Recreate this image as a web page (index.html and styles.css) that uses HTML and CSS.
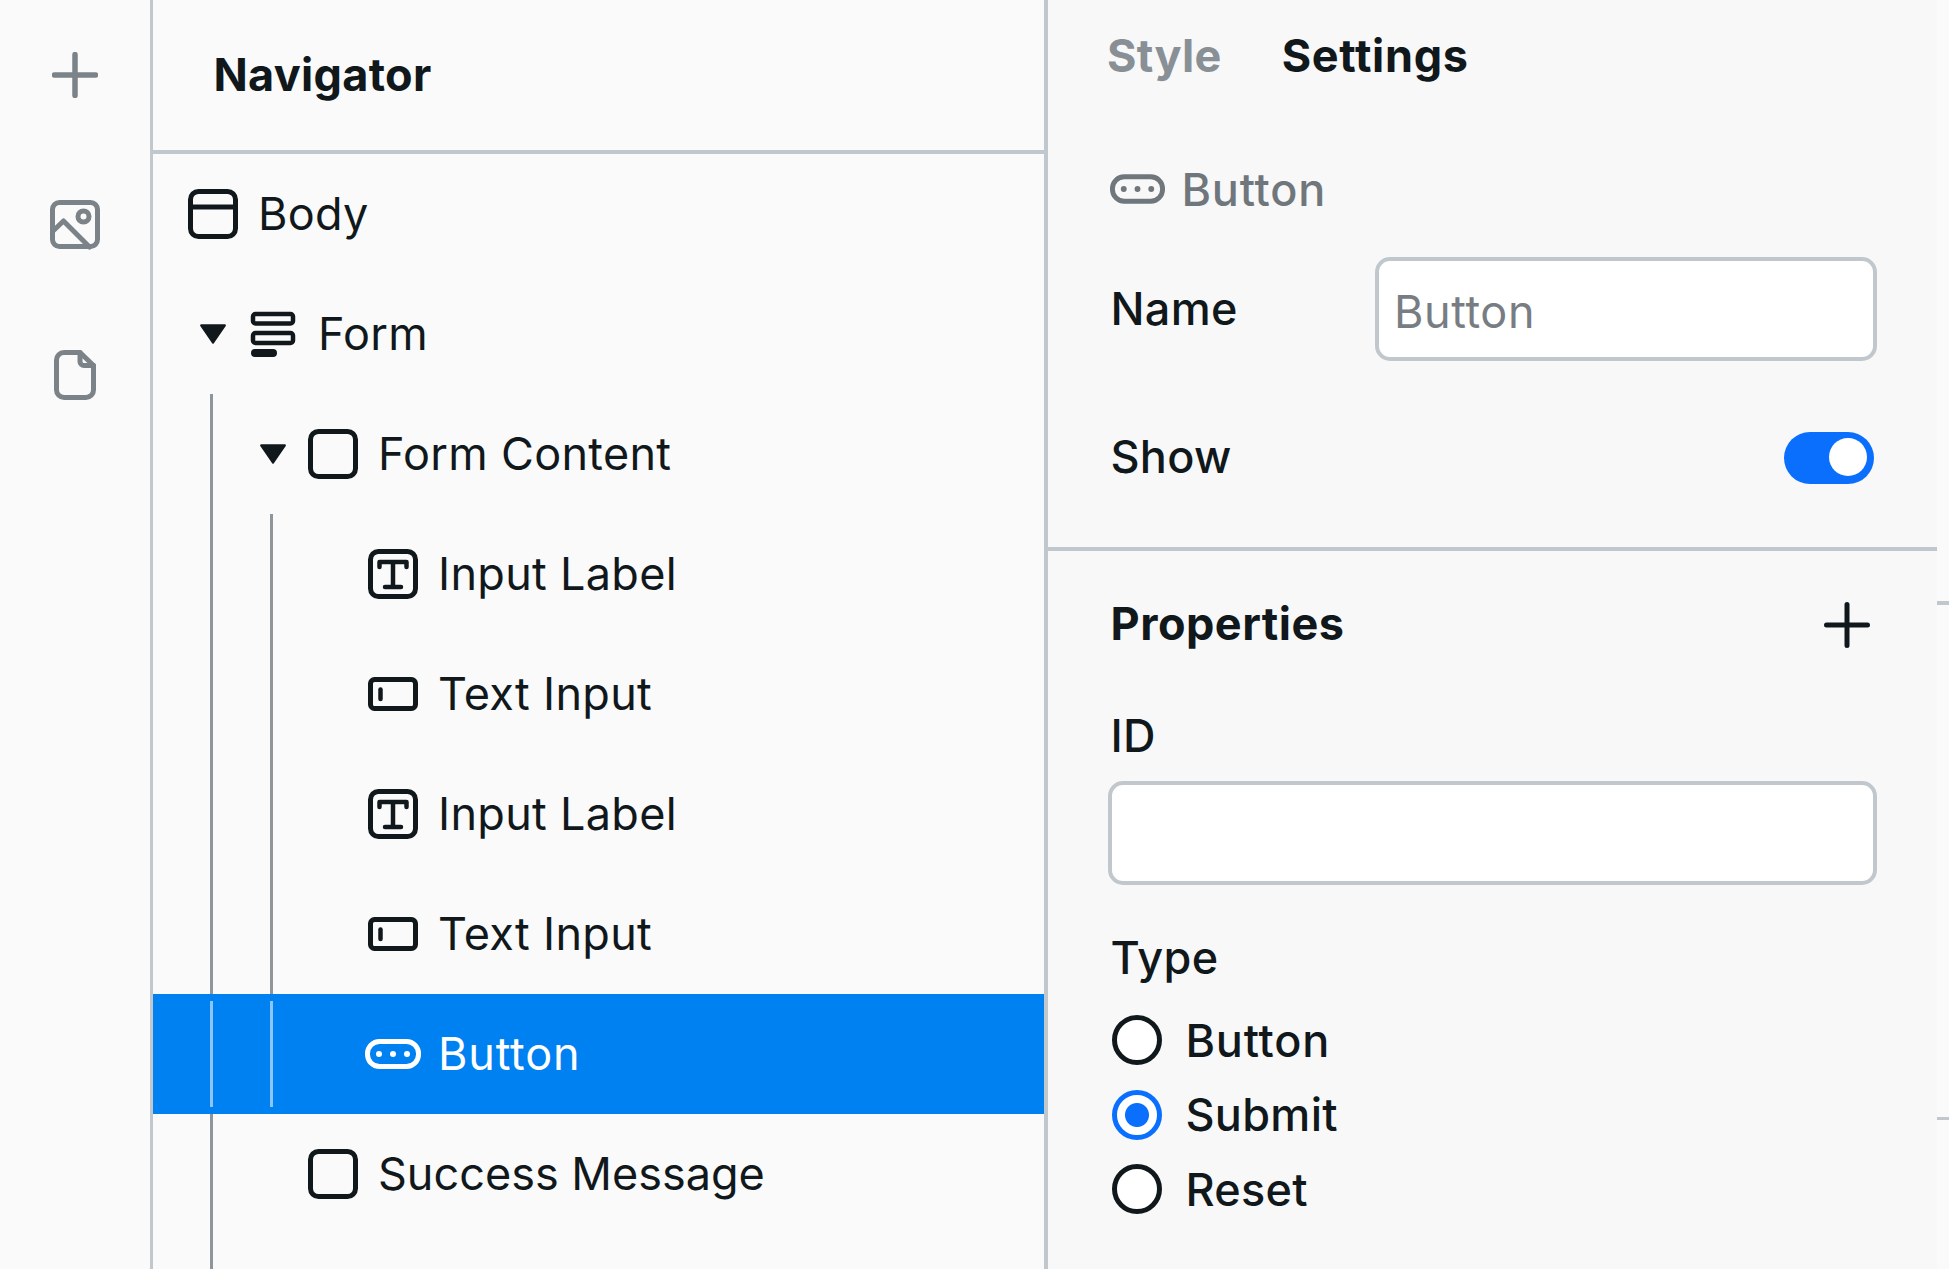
FILE: index.html
```html
<!DOCTYPE html>
<html lang="en">
<head>
<meta charset="utf-8">
<title>Navigator</title>
<link rel="stylesheet" href="styles.css">
</head>
<body>
<div class="app">
  <aside class="rail">
    <button class="rail-btn rail-plus" type="button" aria-label="Add">
      <svg viewBox="0 0 46 46" width="46" height="46"><path d="M23 2.500v41M2.500 23h41"/></svg>
    </button>
    <button class="rail-btn rail-image" type="button" aria-label="Assets">
      <svg viewBox="0 0 50 50" width="50" height="50"><rect x="2.500" y="2.500" width="45" height="44" rx="7"/><path d="M3 31 13.500 21 39.500 47"/><circle cx="33.500" cy="16.500" r="5.500"/></svg>
    </button>
    <button class="rail-btn rail-file" type="button" aria-label="Pages">
      <svg viewBox="0 0 42 50" width="42" height="50"><path d="M26 2.500H10a7.500 7.500 0 0 0-7.500 7.500v30a7.500 7.500 0 0 0 7.500 7.500h22a7.500 7.500 0 0 0 7.500-7.500V15.500z"/><path d="M26 2.500v9a4 4 0 0 0 4 4h9.500"/></svg>
    </button>
  </aside>

  <section class="navigator">
    <header class="nav-head">Navigator</header>
    <div class="tree">
      <div class="row">
        <svg class="ico" viewBox="0 0 50 50"><rect x="2.500" y="2.500" width="45" height="45" rx="8"/><path d="M3 18h44"/></svg>
        <span>Body</span>
      </div>
      <div class="row l1">
        <span class="caret"><svg viewBox="0 0 26 20" width="28" height="22"><path d="M2 2h22L13 18z"/></svg></span>
        <svg class="ico" viewBox="0 0 50 50"><rect x="5" y="5" width="40" height="9.500" rx="2.500" class="thin"/><rect x="5" y="24" width="40" height="10" rx="2.500" class="thin"/><rect x="3" y="40" width="26" height="8" rx="4" class="solid"/></svg>
        <span>Form</span>
      </div>
      <div class="group g1">
        <div class="row l2">
          <span class="caret"><svg viewBox="0 0 26 20" width="28" height="22"><path d="M2 2h22L13 18z"/></svg></span>
          <svg class="ico" viewBox="0 0 50 50"><rect x="2.500" y="2.500" width="45" height="45" rx="8"/></svg>
          <span>Form Content</span>
        </div>
        <div class="group g2">
          <div class="row l3">
            <span class="caret"></span>
            <svg class="ico" viewBox="0 0 50 50"><rect x="2.500" y="2.500" width="45" height="45" rx="8"/><path class="thick" d="M11.500 18v-5h27v5M25 13v25M17 38h16"/></svg>
            <span>Input Label</span>
          </div>
          <div class="row l3">
            <span class="caret"></span>
            <svg class="ico" viewBox="0 0 50 50"><rect x="2.500" y="10.500" width="45" height="29" rx="4"/><path class="thick" d="M12.500 20.500v9.500"/></svg>
            <span>Text Input</span>
          </div>
          <div class="row l3">
            <span class="caret"></span>
            <svg class="ico" viewBox="0 0 50 50"><rect x="2.500" y="2.500" width="45" height="45" rx="8"/><path class="thick" d="M11.500 18v-5h27v5M25 13v25M17 38h16"/></svg>
            <span>Input Label</span>
          </div>
          <div class="row l3">
            <span class="caret"></span>
            <svg class="ico" viewBox="0 0 50 50"><rect x="2.500" y="10.500" width="45" height="29" rx="4"/><path class="thick" d="M12.500 20.500v9.500"/></svg>
            <span>Text Input</span>
          </div>
          <div class="row l3 selected">
            <span class="caret"></span>
            <svg class="ico wide" viewBox="0 0 56 50"><rect x="2.500" y="12.500" width="51" height="25" rx="12"/><g class="dots"><circle cx="14" cy="25" r="3"/><circle cx="28" cy="25" r="3"/><circle cx="42" cy="25" r="3"/></g></svg>
            <span class="tt">Button</span>
          </div>
        </div>
        <div class="row l2">
          <span class="caret"></span>
          <svg class="ico" viewBox="0 0 50 50"><rect x="2.500" y="2.500" width="45" height="45" rx="8"/></svg>
          <span class="plain">Success Message</span>
        </div>
      </div>
    </div>
  </section>

  <section class="settings">
    <nav class="tabs">
      <span class="tab">Style</span>
      <span class="tab active">Settings</span>
    </nav>
    <div class="comp-title">
      <svg viewBox="0 0 56 50" width="55" height="50"><rect x="2.500" y="12.500" width="51" height="25" rx="12"/><g class="dots"><circle cx="14" cy="25" r="3"/><circle cx="28" cy="25" r="3"/><circle cx="42" cy="25" r="3"/></g></svg>
      <span>Button</span>
    </div>
    <div class="name-row">
      <label class="label" for="name">Name</label>
      <input class="field name-field" id="name" type="text" placeholder="Button">
    </div>
    <div class="show-row">
      <span class="label">Show</span>
      <span class="toggle"><span class="thumb"></span></span>
    </div>
    <hr class="divider">
    <div class="props-head">
      <h2>Properties</h2>
      <svg viewBox="0 0 46 46" width="46" height="46"><path d="M23 2.500v41M2.500 23h41"/></svg>
    </div>
    <label class="label id-label" for="id">ID</label>
    <input class="field id-field" id="id" type="text">
    <div class="label type-label">Type</div>
    <div class="radios">
      <label class="radio"><input type="radio" name="type"><span class="tt">Button</span></label>
      <label class="radio"><input type="radio" name="type" checked><span>Submit</span></label>
      <label class="radio"><input type="radio" name="type"><span>Reset</span></label>
    </div>
  </section>

  <div class="edge"><i class="tick t1"></i><i class="tick t2"></i></div>
</div>
</body>
</html>
```
FILE: styles.css
```css
* { box-sizing: border-box; }
html, body { margin: 0; height: 100%; overflow: hidden; }
body {
  background: #fafafa;
  color: #11181c;
  font-family: Inter, "Liberation Sans", sans-serif;
  font-size: 45px;
}
.app { display: flex; height: 1269px; }

/* left rail */
.rail {
  width: 153px;
  flex: none;
  display: flex;
  flex-direction: column;
  align-items: center;
  padding-top: 52px;
  padding-right: 1px;
  border-right: 3.500px solid #c1c8cd;
}
.rail-btn {
  border: 0;
  background: none;
  padding: 0;
  display: block;
  line-height: 0;
}
.rail-btn svg { fill: none; stroke: #7c8388; stroke-width: 5; stroke-linecap: round; stroke-linejoin: round; }
.rail-plus svg { stroke-width: 5.500; }
.rail-image { margin-top: 102px; }
.rail-file { margin-top: 100px; }

/* navigator */
.navigator {
  width: 895px;
  flex: none;
  display: flex;
  flex-direction: column;
  border-right: 4px solid #c1c8cd;
}
.nav-head {
  height: 154px;
  flex: none;
  padding-left: 60.500px;
  padding-top: 43px;
  line-height: 64px;
  font-weight: 700;
  letter-spacing: 0.3px;
  border-bottom: 4px solid #c1c8cd;
}
.tree { flex: 1; display: flex; flex-direction: column; min-height: 0; }
.group { position: relative; }
.group::before {
  content: "";
  position: absolute;
  top: 0;
  bottom: 0;
  width: 3px;
  background: #8f969b;
}
.g1 { flex: 1; }
.g1::before { left: 57px; }
.g2::before { left: 117px; }

.row {
  position: relative;
  height: 120px;
  display: flex;
  align-items: center;
  padding-left: 35px;
  line-height: 60px;
  letter-spacing: 0.3px;
}
.l1 { padding-left: 35px; }
.l2 { padding-left: 95px; }
.l3 { padding-left: 155px; }
.caret {
  width: 60px;
  flex: none;
  display: flex;
  padding-left: 11px;
  line-height: 0;
}
.caret svg { fill: #11181c; stroke: #11181c; stroke-width: 2; stroke-linejoin: round; }
.ico {
  width: 50px;
  height: 50px;
  flex: none;
  margin-right: 20px;
  fill: none;
  stroke: #11181c;
  stroke-width: 5;
  stroke-linecap: round;
  stroke-linejoin: round;
}
.ico .thin { stroke-width: 4.500; }
.ico .thick { stroke-width: 4.500; }
.ico .solid { fill: #11181c; stroke: none; }
.ico.wide { width: 56px; margin-left: -3px; margin-right: 17px; }
.dots { stroke: none; }
.plain { letter-spacing: 0; }
.tt { letter-spacing: 0.8px; }

.selected {
  z-index: 1;
  background: #0081f1;
  color: #fff;
}
.selected::before,
.selected::after {
  content: "";
  position: absolute;
  top: 7px;
  bottom: 7px;
  width: 3px;
  background: #8dc5f8;
}
.selected::before { left: 57px; }
.selected::after { left: 117px; }
.selected .ico { stroke: #fff; }
.selected .dots { fill: #fff; }

/* settings */
.settings {
  width: 889px;
  flex: none;
  padding: 0 60px;
  background: #f8f8f9;
}
.tabs {
  height: 112px;
  display: flex;
  align-items: center;
  gap: 60px;
  padding-bottom: 2px;
  margin-left: -1px;
  font-weight: 700;
  letter-spacing: 0.3px;
}
.tab { color: #889096; }
.tab.active { color: #11181c; letter-spacing: 0.7px; }
.comp-title {
  height: 60px;
  margin-top: 47px;
  padding-left: 1.500px;
  display: flex;
  align-items: center;
  gap: 17px;
  color: #70777c;
  font-weight: 500;
  letter-spacing: 0.8px;
}
.comp-title svg { fill: none; stroke: #70777c; stroke-width: 5; }
.comp-title .dots { fill: #70777c; stroke: none; }
.name-row {
  margin-top: 38px;
  height: 104px;
  display: flex;
  align-items: center;
  justify-content: space-between;
}
.label { line-height: 54px; display: block; padding-left: 2.500px; font-weight: 450; letter-spacing: 0.3px; }
.field {
  display: block;
  height: 104px;
  border: 4px solid #c1c8cd;
  border-radius: 15px;
  background: #fff;
  padding: 4px 15px 0;
  font: inherit;
  letter-spacing: 0.6px;
  color: #11181c;
  outline: 0;
}
.field::placeholder { color: #777d82; opacity: 1; }
.name-field { width: 502px; }
.show-row {
  margin-top: 71px;
  height: 52px;
  display: flex;
  align-items: center;
  justify-content: space-between;
}
.show-row .label { margin-bottom: 2px; }
.toggle {
  width: 90px;
  height: 52px;
  margin-right: 3px;
  padding: 6px 7px;
  border-radius: 26px;
  background: #0b6ffe;
  display: flex;
  justify-content: flex-end;
}
.thumb { width: 38px; height: 38px; border-radius: 50%; background: #fff; }
.divider {
  margin: 63px -60px 0;
  height: 4px;
  border: 0;
  background: #c1c8cd;
}
.props-head {
  margin-top: 43px;
  height: 60px;
  display: flex;
  align-items: center;
  justify-content: space-between;
}
.props-head h2 { margin: 0 0 2px; padding-left: 2.500px; font-size: 45px; font-weight: 700; letter-spacing: 0.5px; }
.props-head svg { margin: 2px 7px 0 0; fill: none; stroke: #11181c; stroke-width: 5; stroke-linecap: round; }
.id-label { margin-top: 55px; }
.id-field { width: 100%; margin-top: 18px; }
.type-label { margin-top: 46px; }
.radios { margin-top: 30px; display: flex; flex-direction: column; gap: 24.500px; font-weight: 450; letter-spacing: 0.3px; }
.radio { height: 50px; display: flex; align-items: center; gap: 23.500px; padding-left: 4px; }
.radio input {
  appearance: none;
  margin: 0;
  width: 50px;
  height: 50px;
  flex: none;
  border-radius: 50%;
  border: 5px solid #11181c;
  background: #fff;
}
.radio input:checked {
  border-color: #0b6ffe;
  background: radial-gradient(circle, #0b6ffe 11.500px, #fff 12.500px);
}

/* sliver of the next panel */
.edge { flex: 1; padding-top: 601px; }
.tick { display: block; height: 3.500px; background: #c1c8cd; }
.t2 { margin-top: 512px; }
```
